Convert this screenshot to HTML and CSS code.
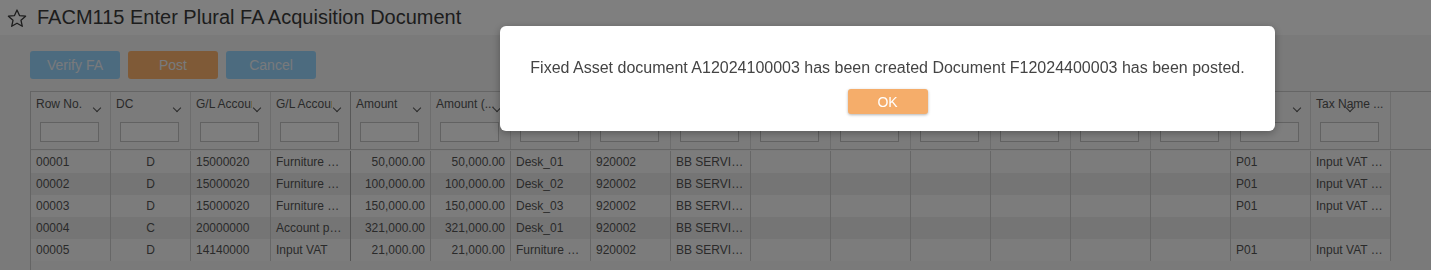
FILE: index.html
```html
<!DOCTYPE html>
<html lang="en">
<head>
    <meta charset="UTF-8">
    <title>FACM115</title>
    <link rel="stylesheet" href="styles.css">
</head>
<body>
    <div class="titlebar">
        <svg class="star" width="20" height="19" viewBox="0 0 20 19"><polygon points="10,1 12.5,6.6 18.6,7.2 14,11.3 15.3,17.3 10,14.2 4.7,17.3 6,11.3 1.4,7.2 7.5,6.6" fill="none" stroke="#3a3a3a" stroke-width="1.3" stroke-linejoin="round"/></svg>
        <h1 class="title">FACM115 Enter Plural FA Acquisition Document</h1>
    </div>

    <div class="toolbar">
        <button class="btn blue">Verify FA</button>
        <button class="btn orange">Post</button>
        <button class="btn blue">Cancel</button>
    </div>

    <div class="grid">
        <div class="head-row">
            <div class="hcell"><span class="label">Row No.</span><i class="chev"></i><input class="filter"></div>
            <div class="hcell"><span class="label">DC</span><i class="chev"></i><input class="filter"></div>
            <div class="hcell"><span class="label clip">G/L Account No.</span><i class="chev"></i><input class="filter"></div>
            <div class="hcell"><span class="label clip">G/L Account Name</span><i class="chev"></i><input class="filter"></div>
            <div class="hcell frozen"><span class="label">Amount</span><i class="chev"></i><input class="filter"></div>
            <div class="hcell"><span class="label">Amount (...</span><i class="chev"></i><input class="filter"></div>
            <div class="hcell"><span class="label">Asset</span><i class="chev"></i><input class="filter"></div>
            <div class="hcell"><span class="label">Vendor</span><i class="chev"></i><input class="filter"></div>
            <div class="hcell"><span class="label">Vendor Name</span><i class="chev"></i><input class="filter"></div>
            <div class="hcell"><span class="label">Dept.</span><i class="chev"></i><input class="filter"></div>
            <div class="hcell"><span class="label">Project</span><i class="chev"></i><input class="filter"></div>
            <div class="hcell"><span class="label">Remark</span><i class="chev"></i><input class="filter"></div>
            <div class="hcell"><span class="label">Ref.</span><i class="chev"></i><input class="filter"></div>
            <div class="hcell"><span class="label">Date</span><i class="chev"></i><input class="filter"></div>
            <div class="hcell"><span class="label">Qty</span><i class="chev"></i><input class="filter"></div>
            <div class="hcell"><span class="label">VAT</span><i class="chev"></i><input class="filter"></div>
            <div class="hcell"><span class="label">Tax Name ...</span><i class="chev mid"></i><input class="filter"></div>
            <div class="hcell filler"></div>
        </div>

        <div class="row">
            <div class="cell">00001</div><div class="cell center">D</div><div class="cell">15000020</div><div class="cell">Furniture and Fixtures</div><div class="cell num frozen">50,000.00</div><div class="cell num">50,000.00</div><div class="cell">Desk_01</div><div class="cell">920002</div><div class="cell">BB SERVICE CO., LTD.</div><div class="cell"></div><div class="cell"></div><div class="cell"></div><div class="cell"></div><div class="cell"></div><div class="cell"></div><div class="cell">P01</div><div class="cell">Input VAT 7%</div>
        </div>
        <div class="row">
            <div class="cell">00002</div><div class="cell center">D</div><div class="cell">15000020</div><div class="cell">Furniture and Fixtures</div><div class="cell num frozen">100,000.00</div><div class="cell num">100,000.00</div><div class="cell">Desk_02</div><div class="cell">920002</div><div class="cell">BB SERVICE CO., LTD.</div><div class="cell"></div><div class="cell"></div><div class="cell"></div><div class="cell"></div><div class="cell"></div><div class="cell"></div><div class="cell">P01</div><div class="cell">Input VAT 7%</div>
        </div>
        <div class="row">
            <div class="cell">00003</div><div class="cell center">D</div><div class="cell">15000020</div><div class="cell">Furniture and Fixtures</div><div class="cell num frozen">150,000.00</div><div class="cell num">150,000.00</div><div class="cell">Desk_03</div><div class="cell">920002</div><div class="cell">BB SERVICE CO., LTD.</div><div class="cell"></div><div class="cell"></div><div class="cell"></div><div class="cell"></div><div class="cell"></div><div class="cell"></div><div class="cell">P01</div><div class="cell">Input VAT 7%</div>
        </div>
        <div class="row">
            <div class="cell">00004</div><div class="cell center">C</div><div class="cell">20000000</div><div class="cell">Account payable</div><div class="cell num frozen">321,000.00</div><div class="cell num">321,000.00</div><div class="cell">Desk_01</div><div class="cell">920002</div><div class="cell">BB SERVICE CO., LTD.</div><div class="cell"></div><div class="cell"></div><div class="cell"></div><div class="cell"></div><div class="cell"></div><div class="cell"></div><div class="cell"></div><div class="cell"></div>
        </div>
        <div class="row">
            <div class="cell">00005</div><div class="cell center">D</div><div class="cell">14140000</div><div class="cell">Input VAT</div><div class="cell num frozen">21,000.00</div><div class="cell num">21,000.00</div><div class="cell">Furniture and Fixtures</div><div class="cell">920002</div><div class="cell">BB SERVICE CO., LTD.</div><div class="cell"></div><div class="cell"></div><div class="cell"></div><div class="cell"></div><div class="cell"></div><div class="cell"></div><div class="cell">P01</div><div class="cell">Input VAT 7%</div>
        </div>
    </div>

    <!-- message box -->
    <div class="overlay">
        <div class="dialog">
            <p class="message">Fixed Asset document A12024100003 has been created Document F12024400003 has been posted.</p>
            <button class="ok-btn">OK</button>
        </div>
    </div>
</body>
</html>
```

FILE: styles.css
```css
body {
    margin: 0;
    height: 270px;
    overflow: hidden;
    background-color: #f4f4f4;
    font-family: "Liberation Sans", Arial, sans-serif;
    color: #555;
}

.titlebar {
    height: 35px;
    background-color: white;
    display: flex;
    align-items: center;
    padding-left: 7px;
    gap: 10px;
}

.star {
    margin-top: 1px;
}

.title {
    margin: 0;
    font-size: 20px;
    font-weight: normal;
    color: #3a3a3a;
}

.toolbar {
    display: flex;
    gap: 8px;
    padding: 16px 0 12px 30px;
}

.btn {
    width: 90px;
    height: 28px;
    border: none;
    border-radius: 3px;
    color: #f0f4f8;
    font-family: inherit;
    font-size: 14px;
}

.blue {
    background-color: #98d6ff;
}

.orange {
    background-color: #ffb56f;
}

.grid {
    margin-left: 30px;
    border-left: 1px solid #c8c8c8;
    height: 179px;
}

.head-row,
.row {
    display: grid;
    grid-template-columns: repeat(17, 80px) 1fr;
}

.head-row {
    height: 59px;
    box-sizing: border-box;
    border-top: 1px solid #cbcbcb;
    border-bottom: 1px solid #cbcbcb;
    margin-bottom: 1px;
    background-color: #f6f6f6;
}

.hcell {
    position: relative;
    border-right: 1px solid #dadada;
    font-size: 12px;
    color: #555;
}

.hcell.frozen {
    border-left: 1px solid #b0b0b0;
    margin-left: -1px;
}

.hcell.filler {
    border-right: none;
}

.label {
    position: absolute;
    left: 5px;
    top: 5px;
    white-space: nowrap;
}

.label.clip {
    width: 56px;
    overflow: hidden;
}

.chev {
    position: absolute;
    right: 10px;
    top: 13px;
    width: 5px;
    height: 5px;
    border-right: 1px solid #555;
    border-bottom: 1px solid #555;
    transform: rotate(45deg);
}

.chev.mid {
    right: auto;
    left: 36px;
}

.filter {
    position: absolute;
    left: 9px;
    top: 30px;
    width: 59px;
    height: 20px;
    box-sizing: border-box;
    border: 1px solid #c4c4c4;
    background-color: #fdfdfd;
    margin: 0;
    padding: 0;
}

.row {
    height: 22px;
    font-size: 12px;
    line-height: 22px;
}

.cell {
    padding: 0 5px;
    border-right: 1px solid #cfcfcf;
    white-space: nowrap;
    overflow: hidden;
    text-overflow: ellipsis;
    background-color: #f9f9f9;
}

.row:nth-child(odd) .cell {
    background-color: #ebebeb;
}

.cell.frozen {
    border-left: 1px solid #a8a8a8;
    margin-left: -1px;
}

.center {
    text-align: center;
}

.num {
    text-align: right;
}

.overlay {
    position: fixed;
    inset: 0;
    background-color: rgba(0, 0, 0, 0.5);
}

.dialog {
    position: absolute;
    left: 500px;
    top: 26px;
    width: 775px;
    height: 105px;
    box-sizing: border-box;
    padding-top: 32px;
    background-color: white;
    border-radius: 6px;
    box-shadow: 0 2px 8px rgba(0, 0, 0, 0.3);
    text-align: center;
}

.message {
    margin: 0 0 11px;
    font-size: 16px;
    line-height: 20px;
    color: #444;
}

.ok-btn {
    width: 80px;
    height: 25px;
    border: none;
    border-radius: 3px;
    background-color: #f5ad6a;
    color: white;
    font-family: inherit;
    font-size: 14px;
    box-shadow: 0 1px 3px rgba(0, 0, 0, 0.3);
}
```
